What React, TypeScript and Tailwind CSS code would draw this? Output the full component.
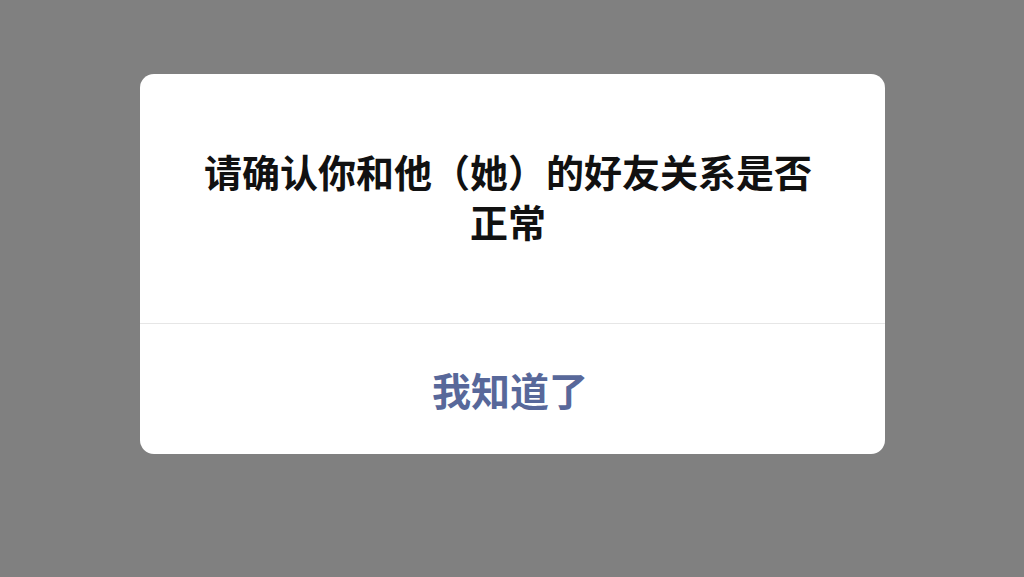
export default function App() {
  return (
    <div
      className="w-full h-[577px] bg-[#808080] flex items-start justify-center pt-[74px]"
      style={{ fontFamily: '"Noto Sans CJK SC", "Noto Sans", sans-serif' }}
    >
      <div className="w-[745px] bg-white rounded-[14px] overflow-hidden flex flex-col">
        <div className="h-[249px] pl-[56px] pr-[64px] pt-[72px] text-center">
          <p className="text-[38px] leading-[50px] font-bold text-[#111111]">
            请确认你和他（她）的好友关系是否正常
          </p>
        </div>
        <div className="h-px bg-[#e6e6e6]" />
        <button className="h-[130px] w-full flex items-center justify-center pr-[4px] text-[39px] font-bold text-[#58689a]">
          我知道了
        </button>
      </div>
    </div>
  );
}
